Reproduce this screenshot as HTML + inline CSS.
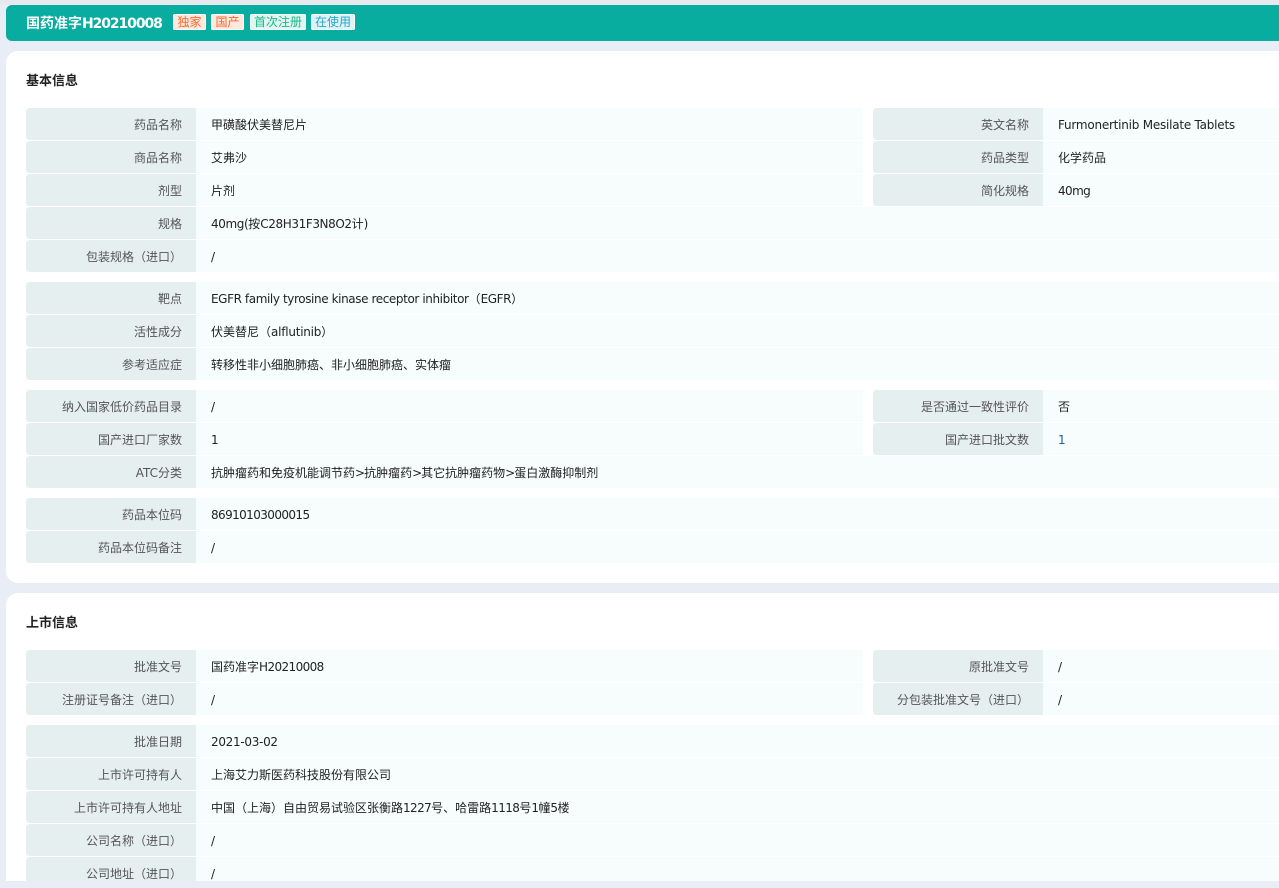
<!DOCTYPE html>
<html lang="zh"><head><meta charset="utf-8"><style>
html,body{margin:0;padding:0;width:1279px;height:888px;overflow:hidden;background:#e9eef6}
body{position:relative;font-family:"DejaVu Sans","Noto Sans CJK SC",sans-serif;font-size:12px;color:#222}
body:before{content:"";position:absolute;left:0;top:0;width:1279px;height:5px;background:#e6e9ee}
.hd{position:absolute;left:6px;top:5px;width:1273px;height:36px;background:#08ad9f;border-radius:6px 0 0 6px}
.hd b{position:absolute;left:20px;top:9px;font:bold 14px/20px "DejaVu Sans","Noto Sans CJK SC",sans-serif;color:#fff;white-space:nowrap}
.hd b span{letter-spacing:-1.1px}
.tag{position:absolute;top:9px;height:16px;line-height:16px;text-align:center;border-radius:2px;font-family:"Noto Sans CJK SC",sans-serif;font-size:12px;box-shadow:inset 0 0 0 1px #fff}
.card{position:absolute;left:6px;width:1273px;background:#fff;border-radius:12px 0 0 12px;overflow:hidden}
.t{position:absolute;left:20px;font:bold 13px/20px "Noto Sans CJK SC",sans-serif;color:#222}
.r{position:absolute;left:20px;width:1253px;height:32px;background:#f6fdfc;line-height:34px;white-space:nowrap}
.l{position:absolute;left:0;top:0;width:156px;height:32px;padding-right:14px;text-align:right;background:#e6eff0;border-radius:4px 0 0 4px;color:#555}
.v{position:absolute;left:185px;top:0}
.h{width:837px}
.x{position:absolute;left:867px;width:406px;height:32px;background:#f6fdfc;line-height:34px;white-space:nowrap}
.x .v{left:185px}
.d{letter-spacing:-.6px}
.e{letter-spacing:-.23px}
.f{letter-spacing:-.4px}
</style></head><body>
<div class="hd"><b>国药准字<span>H20210008</span></b>
<span class="tag" style="left:167px;width:33px;background:#ffe9df;color:#f5672e">独家</span>
<span class="tag" style="left:205px;width:33px;background:#ffe9df;color:#f5672e">国产</span>
<span class="tag" style="left:244px;width:56px;background:#dff7f0;color:#19b889">首次注册</span>
<span class="tag" style="left:305px;width:44px;background:#dcf3f9;color:#2ba6c9">在使用</span>
</div>

<div class="card" style="top:51px;height:532px">
<div class="t" style="top:19px">基本信息</div>
<div class="r h" style="top:57px"><div class="l">药品名称</div><div class="v">甲磺酸伏美替尼片</div></div>
<div class="x" style="top:57px"><div class="l">英文名称</div><div class="v e">Furmonertinib Mesilate Tablets</div></div>
<div class="r h" style="top:90px"><div class="l">商品名称</div><div class="v">艾弗沙</div></div>
<div class="x" style="top:90px"><div class="l">药品类型</div><div class="v">化学药品</div></div>
<div class="r h" style="top:123px"><div class="l">剂型</div><div class="v">片剂</div></div>
<div class="x" style="top:123px"><div class="l">简化规格</div><div class="v"><span class="d">40mg</span></div></div>
<div class="r" style="top:156px"><div class="l">规格</div><div class="v"><span class="f">40mg(</span>按<span class="f">C28H31F3N8O2</span>计<span class="f">)</span></div></div>
<div class="r" style="top:189px"><div class="l">包装规格（进口）</div><div class="v">/</div></div>

<div class="r" style="top:231px"><div class="l">靶点</div><div class="v"><span class="f">EGFR family tyrosine kinase receptor inhibitor</span>（<span class="f">EGFR</span>）</div></div>
<div class="r" style="top:264px"><div class="l">活性成分</div><div class="v">伏美替尼（<span class="e">alflutinib</span>）</div></div>
<div class="r" style="top:297px"><div class="l">参考适应症</div><div class="v">转移性非小细胞肺癌、非小细胞肺癌、实体瘤</div></div>

<div class="r h" style="top:339px"><div class="l">纳入国家低价药品目录</div><div class="v">/</div></div>
<div class="x" style="top:339px"><div class="l">是否通过一致性评价</div><div class="v">否</div></div>
<div class="r h" style="top:372px"><div class="l">国产进口厂家数</div><div class="v">1</div></div>
<div class="x" style="top:372px"><div class="l">国产进口批文数</div><div class="v" style="color:#1f5fa8">1</div></div>
<div class="r" style="top:405px"><div class="l">ATC分类</div><div class="v">抗肿瘤药和免疫机能调节药<span style="letter-spacing:-1px">&gt;</span>抗肿瘤药<span style="letter-spacing:-1px">&gt;</span>其它抗肿瘤药物<span style="letter-spacing:-1px">&gt;</span>蛋白激酶抑制剂</div></div>

<div class="r" style="top:447px"><div class="l">药品本位码</div><div class="v d">86910103000015</div></div>
<div class="r" style="top:480px"><div class="l">药品本位码备注</div><div class="v">/</div></div>
</div>

<div class="card" style="top:593px;height:288px;border-radius:12px 0 0 0">
<div class="t" style="top:19px">上市信息</div>
<div class="r h" style="top:57px"><div class="l">批准文号</div><div class="v">国药准字<span class="d">H20210008</span></div></div>
<div class="x" style="top:57px"><div class="l">原批准文号</div><div class="v">/</div></div>
<div class="r h" style="top:90px"><div class="l">注册证号备注（进口）</div><div class="v">/</div></div>
<div class="x" style="top:90px"><div class="l">分包装批准文号（进口）</div><div class="v">/</div></div>

<div class="r" style="top:132px"><div class="l">批准日期</div><div class="v" style="letter-spacing:-.3px">2021-03-02</div></div>
<div class="r" style="top:165px"><div class="l">上市许可持有人</div><div class="v">上海艾力斯医药科技股份有限公司</div></div>
<div class="r" style="top:198px"><div class="l">上市许可持有人地址</div><div class="v">中国（上海）自由贸易试验区张衡路<span class="d">1227</span>号、哈雷路<span class="d">1118</span>号<span class="d">1</span>幢<span class="d">5</span>楼</div></div>
<div class="r" style="top:231px"><div class="l">公司名称（进口）</div><div class="v">/</div></div>
<div class="r" style="top:264px"><div class="l">公司地址（进口）</div><div class="v">/</div></div>
</div>
</body></html>
